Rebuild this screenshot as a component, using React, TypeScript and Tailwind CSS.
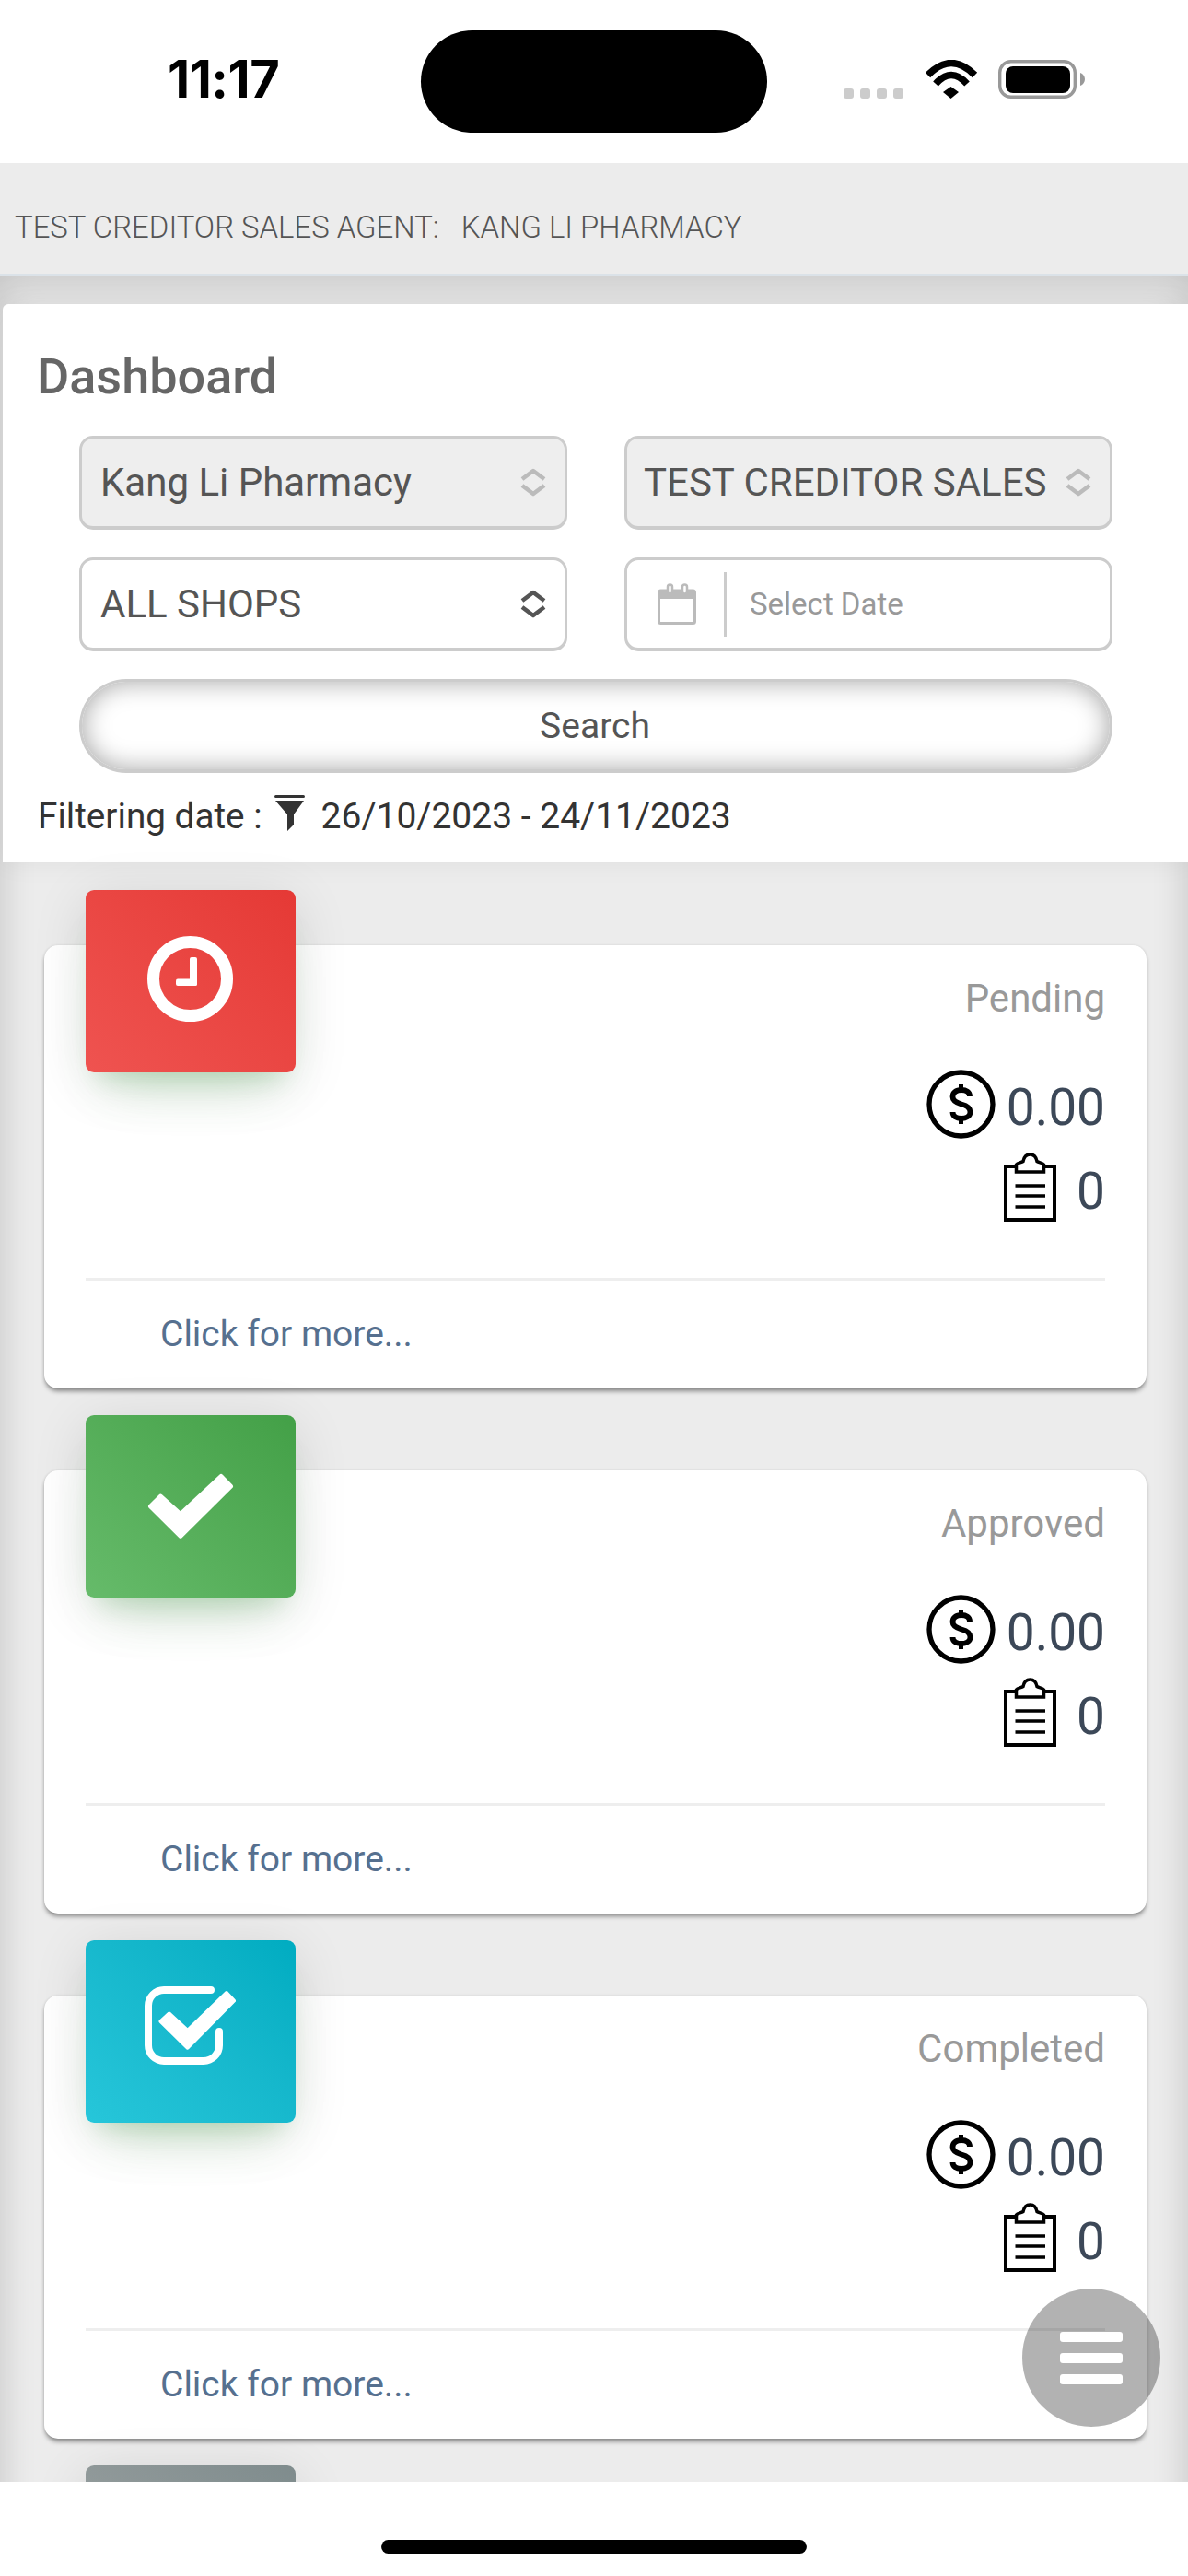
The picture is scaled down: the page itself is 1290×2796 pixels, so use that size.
import React from "react";

const tileShadow =
  "shadow-[0_36px_60px_-30px_rgba(76,175,80,0.28),0_12px_60px_0_rgba(0,0,0,0.12),0_21px_24px_-15px_rgba(76,175,80,0.2)]";

function ClockIcon() {
  return (
    <svg width="93" height="93" viewBox="0 0 93 93" className="mb-[5px] -ml-[1px]">
      <circle cx="46.5" cy="46.5" r="40" fill="none" stroke="#fff" strokeWidth="13" />
      <rect x="46" y="23" width="8" height="31" rx="2" fill="#fff" />
      <rect x="31" y="46.5" width="23" height="7.5" rx="2" fill="#fff" />
    </svg>
  );
}
function CheckIcon() {
  return (
    <svg width="94" height="72" viewBox="0 0 94 72">
      <polygon points="3.5,36 14.3,25.2 36,44.5 80,3.5 90.5,14.3 36,68.2" fill="#fff" stroke="#fff" strokeWidth="5" strokeLinejoin="round" />
    </svg>
  );
}
function CheckSquareIcon() {
  return (
    <svg width="100" height="85" viewBox="0 0 100 85" className="mb-[14px]">
      <path d="M72 4H21A17 17 0 0 0 4 21V64A17 17 0 0 0 21 81H64A17 17 0 0 0 81 64V49" fill="none" stroke="#fff" strokeWidth="8" strokeLinecap="round" />
      <polygon points="17.5,38 26.7,29.5 46.7,48 89,7 97,15.7 46.7,66.7" fill="#fff" stroke="#fff" strokeWidth="4" strokeLinejoin="round" />
    </svg>
  );
}
function DollarIcon() {
  return (
    <svg width="75" height="75" viewBox="0 0 75 75" fill="none" stroke="#000">
      <circle cx="37.5" cy="37.5" r="34.5" strokeWidth="5.3" />
      <path d="M47 29C47 24 43 22 38 22C32 22 28.5 25 28.5 29.5C28.5 34 33 36 38 37.5C44 39 47.5 41 47.5 46C47.5 50.5 43 53 38 53C32 53 28.5 50.5 28.5 46" strokeWidth="5.8" />
      <path d="M37.5 16V22M37.5 53V59" strokeWidth="5" />
    </svg>
  );
}
function ClipboardIcon() {
  return (
    <svg width="57" height="75" viewBox="0 0 57 75" fill="none" stroke="#000">
      <rect x="2" y="15" width="53" height="58" strokeWidth="4" />
      <path d="M13.5 21V13C15 11 19 11 21 9.500C22 4 25 2 28.500 2C32 2 35 4 36 9.500C38 11 42 11 43.500 13V21Z" fill="#fff" strokeWidth="3.500" />
      <path d="M12.500 36H45M12.500 47H45M12.500 59H45" strokeWidth="3.500" />
    </svg>
  );
}
function Chevrons({ color }: { color: string }) {
  return (
    <svg width="28" height="31" viewBox="0 0 28 31" fill="none" stroke={color} strokeWidth="4.500" strokeLinejoin="round">
      <path d="M2 12L14 3L26 12" />
      <path d="M2 19L14 28L26 19" />
    </svg>
  );
}
function CalendarIcon() {
  return (
    <svg width="42" height="45" viewBox="0 0 42 45" fill="none">
      <rect x="1.500" y="8" width="39" height="35.500" rx="2" stroke="#bbb" strokeWidth="3" />
      <rect x="1.500" y="8" width="39" height="9" fill="#bbb" />
      <rect x="11" y="1.500" width="5" height="10" rx="2.500" fill="#fff" stroke="#bbb" strokeWidth="2.500" />
      <rect x="27" y="1.500" width="5" height="10" rx="2.500" fill="#fff" stroke="#bbb" strokeWidth="2.500" />
    </svg>
  );
}
function FunnelIcon() {
  return (
    <svg width="33" height="39" viewBox="0 0 33 39" fill="#333">
      <rect x="0" y="0" width="33" height="3" rx="1.500" />
      <path d="M1 6H32L21 21V32L14 39V21Z" />
    </svg>
  );
}
function WifiIcon() {
  return (
    <svg width="58" height="42" viewBox="0 0 58 42" fill="none" stroke="#000">
      <path d="M3.500 16.500Q29 -9.500 54.500 16.500" strokeWidth="7.500" />
      <path d="M12 26Q29 7 46 26" strokeWidth="7.500" />
      <polygon points="20,35 28.500,29 37,35 28.500,42" fill="#000" stroke="none" />
    </svg>
  );
}
function BatteryIcon() {
  return (
    <svg width="94" height="42" viewBox="0 0 94 42" fill="none">
      <rect x="1.700" y="1.700" width="81.600" height="38.600" rx="12" stroke="#999" strokeWidth="3.400" />
      <rect x="8" y="7" width="70" height="29" rx="8" fill="#000" />
      <path d="M89 14C92 15 94 18 94 21C94 24 92 27 89 28Z" fill="#999" />
    </svg>
  );
}

function StatusBar() {
  return (
    <div className="h-[177px] shrink-0 bg-white flex items-start pt-[33px] pl-[182px]">
      <div className="w-[275px] pt-[23px] text-[56px] leading-[60px] font-bold text-black tracking-[-0.5px] [font-family:Inter,sans-serif]">11:17</div>
      <div className="w-[376px] h-[111px] rounded-full bg-black" />
      <div className="ml-[83px] mt-[32px] h-[42px] flex items-end">
        <div className="flex gap-[7px] mr-[23px]">
          <span className="w-[11px] h-[11px] rounded-[3px] bg-[#cccccc]" />
          <span className="w-[11px] h-[11px] rounded-[3px] bg-[#cccccc]" />
          <span className="w-[11px] h-[11px] rounded-[3px] bg-[#cccccc]" />
          <span className="w-[11px] h-[11px] rounded-[3px] bg-[#cccccc]" />
        </div>
        <div className="mr-[22px] flex"><WifiIcon /></div>
        <div className="flex"><BatteryIcon /></div>
      </div>
    </div>
  );
}

function SelectBox({ label, disabled, tight }: { label: string; disabled?: boolean; tight?: boolean }) {
  return (
    <div
      className={`h-[102px] rounded-[15px] border-[3px] border-b-[4px] border-[#cccccc] flex items-center justify-between pr-[20px] ${tight ? "pl-[18px]" : "pl-[20px]"} text-[42px] text-[#555555] ${disabled ? "bg-[#eeeeee]" : "bg-white"}`}
    >
      <span className="whitespace-nowrap">{label}</span>
      <Chevrons color={disabled ? "#bbbbbb" : "#555555"} />
    </div>
  );
}

function Filters() {
  return (
    <section className="bg-white h-[606px] ml-[3px] shadow-[0_0_30px_rgba(0,0,0,0.06)] rounded-tl-[6px] flex flex-col">
      <h1 className="ml-[37px] mt-[47px] h-[64px] leading-[64px] text-[54px] font-medium text-[#666666]">Dashboard</h1>
      <div className="ml-[83px] mr-[82px] mt-[32px] grid grid-cols-2 gap-x-[62px] gap-y-[30px]">
        <SelectBox label="Kang Li Pharmacy" disabled />
        <SelectBox label="TEST CREDITOR SALES" disabled tight />
        <SelectBox label="ALL SHOPS" />
        <div className="h-[102px] rounded-[15px] border-[3px] border-b-[4px] border-[#cccccc] bg-white flex items-center pl-[33px]">
          <CalendarIcon />
          <span className="ml-[30px] w-[3px] h-[70px] bg-[#cccccc]" />
          <span className="ml-[25px] text-[33px] text-[#999999]">Select Date</span>
        </div>
        <button className="col-span-2 h-[102px] pt-[2px] pr-[2px] rounded-full border-[3px] border-b-[4px] border-[#cccccc] bg-white shadow-[inset_0_0_28px_rgba(0,0,0,0.36)] text-[39px] text-[#555555]">
          Search
        </button>
      </div>
      <div className="ml-[38px] mt-[24px] flex items-center text-[38.7px] text-[#333333] h-[46px]">
        <span>Filtering date :</span>
        <span className="ml-[13px] mb-[8px] flex"><FunnelIcon /></span>
        <span className="ml-[18px] text-[39px]">26/10/2023 - 24/11/2023</span>
      </div>
    </section>
  );
}

function StatCard({ title, gradient, icon }: { title?: string; gradient: string; icon?: React.ReactNode }) {
  return (
    <article className="relative h-[481px] bg-white rounded-[15px] shadow-[0_4px_5px_-1px_rgba(0,0,0,0.42),0_0_3px_rgba(0,0,0,0.1)] flex flex-col px-[45px]">
      <div className={`absolute left-[45px] -top-[60px] w-[228px] h-[198px] rounded-[9px] flex items-center justify-center ${gradient} ${tileShadow}`}>
        {icon}
      </div>
      {title && (
        <>
          <div className="mt-[33px] h-[50px] leading-[50px] text-right text-[42px] text-[#999999]">{title}</div>
          <div className="mt-[52px] h-[75px] flex justify-end items-center gap-[12px]">
            <DollarIcon />
            <span className="mt-[8px] text-[55px] leading-[75px] font-normal text-[#3c4858]">0.00</span>
          </div>
          <div className="mt-[15px] h-[75px] flex justify-end items-center gap-[22px]">
            <ClipboardIcon />
            <span className="mt-[10px] text-[55px] leading-[75px] font-normal text-[#3c4858]">0</span>
          </div>
          <div className="mt-[61px] h-[3px] bg-[#eeeeee]" />
          <div className="mt-[33px] ml-[81px] text-[39px] leading-[50px] text-[#56708f]">Click for more...</div>
        </>
      )}
    </article>
  );
}

export default function App() {
  return (
    <div className="relative w-[1290px] h-[2796px] overflow-hidden bg-white flex flex-col [font-family:Roboto,sans-serif]">
      <StatusBar />
      <div className="h-[120px] shrink-0 bg-[#ececec] flex items-center pl-[16px] pt-[20px] text-[32.9px] font-light text-[#555555] whitespace-pre">
        TEST CREDITOR SALES AGENT:{"   "}KANG LI PHARMACY
      </div>
      <div className="flex-1 min-h-0 overflow-hidden border-t-[3px] border-[#dbe2e8]">
        <main className="bg-[#ececec] pt-[30px] h-[2600px] shadow-[inset_0_0_40px_rgba(0,0,0,0.13),inset_0_30px_40px_rgba(0,0,0,0.05)]">
          <Filters />
          <div className="mt-[90px] mx-[45px] ml-[48px] flex flex-col gap-[89px]">
            <StatCard title="Pending" gradient="bg-gradient-to-tr from-[#ef5350] to-[#e53935]" icon={<ClockIcon />} />
            <StatCard title="Approved" gradient="bg-gradient-to-tr from-[#66bb6a] to-[#43a047]" icon={<CheckIcon />} />
            <StatCard title="Completed" gradient="bg-gradient-to-tr from-[#26c6da] to-[#00acc1]" icon={<CheckSquareIcon />} />
            <StatCard gradient="bg-gradient-to-tr from-[#a0a5a5] to-[#7f8c8d]" />
          </div>
        </main>
      </div>
      <div className="h-[102px] shrink-0 bg-white flex justify-center pt-[63px]">
        <div className="w-[462px] h-[15px] rounded-full bg-black" />
      </div>
      <button className="absolute right-[30px] bottom-[162px] w-[150px] h-[150px] rounded-full bg-[rgba(0,0,0,0.3)] flex flex-col items-center justify-center gap-[12px]">
        <span className="w-[68px] h-[11px] rounded-[3px] bg-white" />
        <span className="w-[68px] h-[11px] rounded-[3px] bg-white" />
        <span className="w-[68px] h-[11px] rounded-[3px] bg-white" />
      </button>
    </div>
  );
}
